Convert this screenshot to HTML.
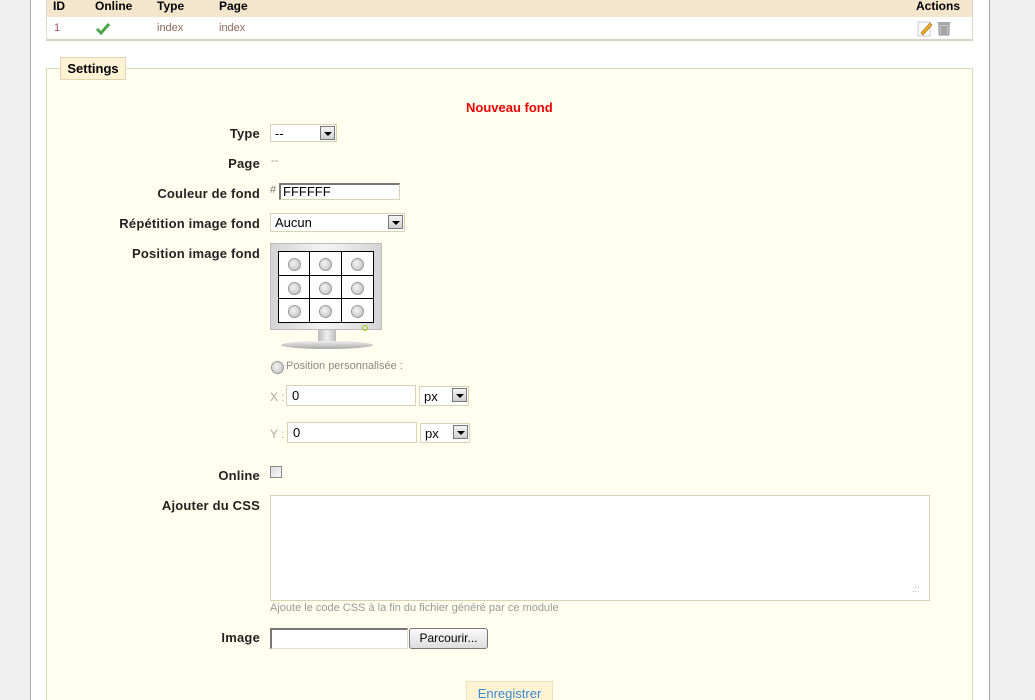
<!DOCTYPE html>
<html style="overflow:hidden;height:700px"><head><meta charset="utf-8"><style>
body{margin:0;width:1035px;height:700px;overflow:hidden;background:#efefef;font-family:"Liberation Sans",Arial,sans-serif;position:relative}
.a{position:absolute}
#main{left:30px;top:0;width:958px;height:700px;background:#fff;border-left:1px solid #a8a8a8;border-right:1px solid #a8a8a8}
.lbl{position:absolute;right:775px;font-weight:bold;font-size:13px;color:#222;text-align:right;white-space:nowrap;letter-spacing:0.2px}
.inp{position:absolute;background:#fff;border:1px solid #dcd0b4;box-sizing:border-box;font-size:13px;padding:1px 5px;color:#000}
.sel{position:absolute;background:#fff;border:1px solid #dcd0b4;box-sizing:border-box;font-size:13px;padding:1px 4px;color:#000}
.sel i{position:absolute;right:1px;top:1px;width:15px;height:14px;background:linear-gradient(#f4f4f4,#cfcfcf);border:1px solid #777;box-sizing:border-box}
.sel i:after{content:"";position:absolute;left:3px;top:5px;border-left:4px solid transparent;border-right:4px solid transparent;border-top:4px solid #000}
.rad{position:absolute;width:11px;height:11px;border-radius:50%;background:radial-gradient(circle at 40% 40%,#f4f4f4,#b8b8b8);border:1px solid #999}
.small{font-size:11px;color:#999}
</style></head><body>
<div id="main" class="a"></div>
<div class="a" style="left:46px;top:0;width:927px;height:41px;border:1px solid #dcd6cc;border-top:none;border-bottom:2px solid #d8d2c8;box-sizing:border-box;background:#fff"></div>
<div class="a" style="left:47px;top:0;width:925px;height:17px;background:#f4e6cc"></div>
<div class="a" style="top:-1px;left:53px;font-weight:bold;font-size:12px">ID</div>
<div class="a" style="top:-1px;left:95px;font-weight:bold;font-size:12px">Online</div>
<div class="a" style="top:-1px;left:157px;font-weight:bold;font-size:12px">Type</div>
<div class="a" style="top:-1px;left:219px;font-weight:bold;font-size:12px">Page</div>
<div class="a" style="top:-1px;left:916px;font-weight:bold;font-size:12px">Actions</div>
<div class="a" style="top:22px;left:54px;font-size:11px;color:#a0506a">1</div>
<svg class="a" style="left:95px;top:22px" width="16" height="14"><path d="M2 7 L6 11 L14 2" stroke="#4aa544" stroke-width="3" fill="none"/></svg>
<div class="a" style="top:22px;left:157px;font-size:11px;color:#8c6a5a">index</div>
<div class="a" style="top:22px;left:219px;font-size:11px;color:#8c6a5a">index</div>
<svg class="a" style="left:917px;top:20px" width="16" height="17"><rect x="1" y="2" width="12" height="14" fill="#fafafa" stroke="#ccc"/><path d="M4 13 L13 3 L15 5 L6 15 Z" fill="#f0b030" stroke="#b07010" stroke-width=".7"/></svg>
<svg class="a" style="left:938px;top:21px" width="12" height="15"><rect x="1" y="3" width="10" height="11" rx="1" fill="#c4c4c4" stroke="#888"/><rect x="0" y="1" width="12" height="3" fill="#aaa"/><path d="M4 5v8M6 5v8M8 5v8" stroke="#888"/></svg>
<div class="a" style="left:46px;top:68px;width:927px;height:640px;background:#fffff0;border:1px solid #ddd5c0;box-sizing:border-box"></div>
<div class="a" style="left:60px;top:57px;width:66px;height:23px;background:#fff3d4;border:1px solid #e0d4b4;box-sizing:border-box;font-weight:bold;font-size:13px;line-height:21px;text-align:center">Settings</div>
<div class="a" style="left:466px;top:100px;color:#e00;font-weight:bold;font-size:13px">Nouveau fond</div>
<div class="lbl" style="top:126px">Type</div>
<div class="sel" style="left:270px;top:124px;width:67px;height:18px">--<i></i></div>
<div class="lbl" style="top:156px">Page</div>
<div class="a small" style="left:271px;top:155px">--</div>
<div class="lbl" style="top:186px">Couleur de fond</div>
<div class="a small" style="left:270px;top:184px;color:#777">#</div>
<div class="inp" style="left:279px;top:183px;width:121px;height:17px;border-top:2px solid #777;border-left:2px solid #777;padding:0 2px;line-height:13px">FFFFFF</div>
<div class="lbl" style="top:216px">Répétition image fond</div>
<div class="sel" style="left:270px;top:213px;width:135px;height:19px">Aucun<i></i></div>
<div class="lbl" style="top:246px">Position image fond</div>
<div class="a" style="left:270px;top:243px;width:112px;height:87px;background:linear-gradient(90deg,#d4d4d4,#f4f4f4 50%,#d4d4d4);border:1px solid #bbb;box-sizing:border-box"></div>
<div class="a" style="left:278px;top:251px;width:96px;height:72px;background:#fff;border:1px solid #000;box-sizing:border-box"></div>
<div class="a" style="left:309px;top:251px;width:1px;height:72px;background:#000"></div>
<div class="a" style="left:341px;top:251px;width:1px;height:72px;background:#000"></div>
<div class="a" style="left:278px;top:275px;width:96px;height:1px;background:#000"></div>
<div class="a" style="left:278px;top:298px;width:96px;height:1px;background:#000"></div>
<div class="rad" style="left:288px;top:258px"></div><div class="rad" style="left:319px;top:258px"></div><div class="rad" style="left:351px;top:258px"></div>
<div class="rad" style="left:288px;top:282px"></div><div class="rad" style="left:319px;top:282px"></div><div class="rad" style="left:351px;top:282px"></div>
<div class="rad" style="left:288px;top:305px"></div><div class="rad" style="left:319px;top:305px"></div><div class="rad" style="left:351px;top:305px"></div>
<div class="a" style="left:362px;top:325px;width:4px;height:4px;border:1px solid #9c0;border-radius:50%"></div>
<div class="a" style="left:318px;top:330px;width:18px;height:12px;background:linear-gradient(90deg,#bbb,#eee,#bbb)"></div>
<div class="a" style="left:281px;top:341px;width:92px;height:8px;border-radius:50%;background:linear-gradient(#eee,#aaa)"></div>
<div class="rad" style="left:271px;top:361px"></div>
<div class="a small" style="left:286px;top:360px;color:#888">Position personnalisée :</div>
<div class="a small" style="left:270px;top:390px;font-size:12px;color:#aaa">X :</div>
<div class="inp" style="left:286px;top:385px;width:130px;height:21px;padding-top:2px">0</div>
<div class="sel" style="left:419px;top:386px;width:50px;height:20px;padding-top:2px">px<i></i></div>
<div class="a small" style="left:270px;top:427px;font-size:12px;color:#aaa">Y :</div>
<div class="inp" style="left:287px;top:422px;width:130px;height:21px;padding-top:2px">0</div>
<div class="sel" style="left:420px;top:423px;width:50px;height:20px;padding-top:2px">px<i></i></div>
<div class="lbl" style="top:468px">Online</div>
<div class="a" style="left:270px;top:466px;width:12px;height:12px;border:1px solid #888;background:linear-gradient(135deg,#ddd,#f8f8f8);box-sizing:border-box"></div>
<div class="lbl" style="top:498px">Ajouter du CSS</div>
<div class="a" style="left:270px;top:495px;width:660px;height:106px;background:#fff;border:1px solid #dcd0b4;box-sizing:border-box"></div>
<div class="a small" style="left:912px;top:584px;color:#aaa;font-size:9px">.::</div>
<div class="a small" style="left:270px;top:602px;font-size:11px">Ajoute le code CSS à la fin du fichier généré par ce module</div>
<div class="lbl" style="top:630px">Image</div>
<div class="a" style="left:270px;top:628px;width:138px;height:21px;background:#fff;border:1px solid #ddd;border-top:2px solid #777;border-left:2px solid #777;box-sizing:border-box"></div>
<div class="a" style="left:409px;top:628px;width:79px;height:21px;border:1px solid #777;border-radius:3px;background:linear-gradient(#fafafa,#ddd);box-sizing:border-box;font-size:12px;text-align:center;line-height:19px">Parcourir...</div>
<div class="a" style="left:466px;top:681px;width:87px;height:19px;background:#fff3d4;border:1px solid #ece0c0;border-bottom:none;box-sizing:border-box;color:#3a8ad0;font-size:13px;text-align:center;line-height:24px">Enregistrer</div>
</body></html>
